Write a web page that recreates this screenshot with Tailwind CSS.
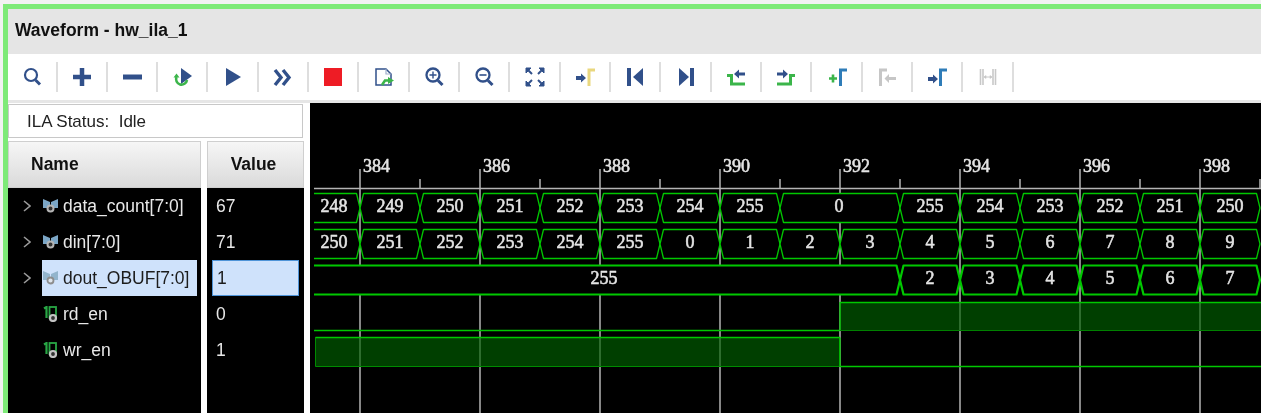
<!DOCTYPE html>
<html>
<head>
<meta charset="utf-8">
<script src="https://cdn.jsdelivr.net/npm/@tailwindcss/browser@4"></script>
</head>
<body class="m-0 bg-[#f2f2f2] font-['Liberation_Sans',Arial,sans-serif]">
<div class="w-[1261px] h-[413px] overflow-hidden pt-[4px] pl-[3px] blur-[0.4px]">
<div class="h-[409px] border-t-[5px] border-l-[5px] border-[#7eea78] flex flex-col bg-white">

  <div class="h-[45px] shrink-0 bg-[#e5e5e5] flex items-center pl-[7px] pb-[2px] text-[17.5px] font-bold text-[#111]">Waveform - hw_ila_1</div>

  <div class="h-[46px] shrink-0 bg-white flex items-center">
    <div class="w-[49.5px] h-[30px] shrink-0 flex items-center justify-center border-r-2 border-[#dedede]"><svg width="24" height="24" viewBox="0 0 24 24" fill="none" stroke="#31508a"><circle cx="11" cy="10" r="6" stroke-width="2.2"/><path d="M15.5 15L20 19.5" stroke-width="3"/></svg></div>
    <div class="w-[50.33px] h-[30px] shrink-0 flex items-center justify-center border-r-2 border-[#dedede]"><svg width="24" height="24" viewBox="0 0 24 24" fill="none" stroke="#31508a"><path d="M3 12H21M12 3V21" stroke-width="4.5"/></svg></div>
    <div class="w-[50.33px] h-[30px] shrink-0 flex items-center justify-center border-r-2 border-[#dedede]"><svg width="24" height="24" viewBox="0 0 24 24" fill="none" stroke="#31508a"><path d="M3 12H22" stroke-width="5"/></svg></div>
    <div class="w-[50.33px] h-[30px] shrink-0 flex items-center justify-center border-r-2 border-[#dedede]"><svg width="24" height="24" viewBox="0 0 24 24" fill="none"><path d="M11 3L22 11L11 19Z" fill="#31508a"/><path d="M6.5 12A5.5 5.5 0 1 0 17 15" stroke="#3bb54a" stroke-width="2.6"/><path d="M3.5 12.5L6.5 8.5L9.5 12.5Z" fill="#3bb54a"/></svg></div>
    <div class="w-[50.33px] h-[30px] shrink-0 flex items-center justify-center border-r-2 border-[#dedede]"><svg width="24" height="24" viewBox="0 0 24 24"><path d="M5 3L20 12L5 21Z" fill="#31508a"/></svg></div>
    <div class="w-[50.33px] h-[30px] shrink-0 flex items-center justify-center border-r-2 border-[#dedede]"><svg width="24" height="24" viewBox="0 0 24 24" fill="none" stroke="#31508a"><path d="M4 5L10 12.5L4 20M12 5L18 12.5L12 20" stroke-width="3.4"/></svg></div>
    <div class="w-[50.33px] h-[30px] shrink-0 flex items-center justify-center border-r-2 border-[#dedede]"><svg width="24" height="24" viewBox="0 0 24 24"><rect x="3" y="3" width="18" height="18" fill="#ee1c25"/></svg></div>
    <div class="w-[50.33px] h-[30px] shrink-0 flex items-center justify-center border-r-2 border-[#dedede]"><svg width="24" height="24" viewBox="0 0 24 24" fill="none"><path d="M4 4H14L19 9V20H4Z" stroke="#31508a" stroke-width="1.5"/><path d="M14 4V9H19" stroke="#9fb0cc" stroke-width="1.2"/><path d="M10 20L13 15.5H17" stroke="#3bb54a" stroke-width="2.6"/><path d="M16 12L22 15.5L16 19Z" fill="#3bb54a"/></svg></div>
    <div class="w-[50.33px] h-[30px] shrink-0 flex items-center justify-center border-r-2 border-[#dedede]"><svg width="24" height="24" viewBox="0 0 24 24" fill="none" stroke="#31508a"><circle cx="11" cy="10" r="6.5" stroke-width="2.3"/><path d="M16 15.5L20.5 20" stroke-width="3"/><path d="M7.5 10H14.5M11 6.5V13.5" stroke-width="1.4"/></svg></div>
    <div class="w-[50.33px] h-[30px] shrink-0 flex items-center justify-center border-r-2 border-[#dedede]"><svg width="24" height="24" viewBox="0 0 24 24" fill="none" stroke="#31508a"><circle cx="11" cy="10" r="6.5" stroke-width="2.3"/><path d="M16 15.5L20.5 20" stroke-width="3"/><path d="M7.5 10H14.5" stroke-width="1.6"/></svg></div>
    <div class="w-[50.33px] h-[30px] shrink-0 flex items-center justify-center border-r-2 border-[#dedede]"><svg width="24" height="24" viewBox="0 0 24 24" fill="#31508a" stroke="#31508a"><path d="M3 3H8L3 8ZM21 3H16L21 8ZM3 21H8L3 16ZM21 21H16L21 16Z" stroke-width="1"/><path d="M5 5L9 9M19 5L15 9M5 19L9 15M19 19L15 15" stroke-width="2"/></svg></div>
    <div class="w-[50.33px] h-[30px] shrink-0 flex items-center justify-center border-r-2 border-[#dedede]"><svg width="24" height="24" viewBox="0 0 24 24" fill="none"><path d="M3 11H8V8.5L13 13L8 17.5V15H3Z" fill="#31508a"/><path d="M16 21V5H22" stroke="#e9d77e" stroke-width="3"/></svg></div>
    <div class="w-[50.33px] h-[30px] shrink-0 flex items-center justify-center border-r-2 border-[#dedede]"><svg width="24" height="24" viewBox="0 0 24 24" fill="#31508a"><rect x="4" y="3" width="4" height="18"/><path d="M20 3V21L10 12Z"/></svg></div>
    <div class="w-[50.33px] h-[30px] shrink-0 flex items-center justify-center border-r-2 border-[#dedede]"><svg width="24" height="24" viewBox="0 0 24 24" fill="#31508a"><rect x="16" y="3" width="4" height="18"/><path d="M5 3V21L15 12Z"/></svg></div>
    <div class="w-[50.33px] h-[30px] shrink-0 flex items-center justify-center border-r-2 border-[#dedede]"><svg width="24" height="24" viewBox="0 0 24 24" fill="none"><path d="M3 10.5H7.5V19H21" stroke="#3bb54a" stroke-width="3"/><path d="M21 7.5H15V4.5L10 9L15 13.5V10.5H21Z" fill="#31508a"/></svg></div>
    <div class="w-[50.33px] h-[30px] shrink-0 flex items-center justify-center border-r-2 border-[#dedede]"><svg width="24" height="24" viewBox="0 0 24 24" fill="none"><path d="M3 19H16.5V10.5H21" stroke="#3bb54a" stroke-width="3"/><path d="M3 7.5H9V4.5L14 9L9 13.5V10.5H3Z" fill="#31508a"/></svg></div>
    <div class="w-[50.33px] h-[30px] shrink-0 flex items-center justify-center border-r-2 border-[#dedede]"><svg width="24" height="24" viewBox="0 0 24 24" fill="none"><path d="M4 13.5H12M8 9.5V17.5" stroke="#3bb54a" stroke-width="2.6"/><path d="M15.5 21V5H22" stroke="#2e7cb8" stroke-width="3"/></svg></div>
    <div class="w-[50.33px] h-[30px] shrink-0 flex items-center justify-center border-r-2 border-[#dedede]"><svg width="24" height="24" viewBox="0 0 24 24" fill="none"><path d="M5.5 21V5H12" stroke="#c6c6c6" stroke-width="3"/><path d="M21 12H14V9L9.5 13.5L14 18V15H21Z" fill="#c6c6c6"/></svg></div>
    <div class="w-[50.33px] h-[30px] shrink-0 flex items-center justify-center border-r-2 border-[#dedede]"><svg width="24" height="24" viewBox="0 0 24 24" fill="none"><path d="M3 12H8V9.5L13 14L8 18.5V16H3Z" fill="#31508a"/><path d="M15.5 21V5H22" stroke="#2e7cb8" stroke-width="3"/></svg></div>
    <div class="w-[50.33px] h-[30px] shrink-0 flex items-center justify-center border-r-2 border-[#dedede]"><svg width="24" height="24" viewBox="0 0 24 24" fill="none" stroke="#c8c8c8"><path d="M4.5 4V20M7 4V20M17 4V20M19.5 4V20" stroke-width="1.6"/><path d="M8 12H16" stroke-width="1"/><path d="M8 12L10 10.5V13.5ZM16 12L14 10.5V13.5Z" fill="#c8c8c8" stroke-width=".6"/></svg></div>
  </div>

  <div class="h-[3px] shrink-0 bg-[#e6e6e6]"></div>

  <div class="flex-1 min-h-0 flex bg-white">
    <div class="w-[296px] shrink-0 flex flex-col pt-px">
      <div class="h-[34px] w-[295px] shrink-0 border border-[#c8c8c8] bg-white flex items-center pl-[18px] pt-[2px] text-[17px] text-[#222]">ILA Status:&nbsp; Idle</div>
      <div class="flex-1 mt-[3px] flex gap-[6px]">
        <div class="w-[193px] bg-black flex flex-col text-[17.5px] text-[#e8e8e8]">
          <div class="h-[47px] shrink-0 bg-gradient-to-b from-[#f6f6f6] to-[#dadada] border border-[#cfcfcf] flex items-center pl-[22px] font-bold text-[#111]">Name</div>
          <div class="h-[36px] flex items-center">
            <svg class="ml-[15px] shrink-0" width="8" height="12" viewBox="0 0 8 12" fill="none" stroke="#9a9a9a" stroke-width="1.6"><path d="M1 1L7 6L1 11"/></svg>
            <svg class="ml-[12px] shrink-0" width="16" height="14" viewBox="0 0 16 14"><path d="M0 0L7 3V9H0ZM15 0L8 3V9H15Z" fill="#7ba6c6"/><circle cx="7.5" cy="9.5" r="3" fill="#333" stroke="#b4b4b4" stroke-width="2"/></svg>
            <span class="ml-[4px]">data_count[7:0]</span>
          </div>
          <div class="h-[36px] flex items-center">
            <svg class="ml-[15px] shrink-0" width="8" height="12" viewBox="0 0 8 12" fill="none" stroke="#9a9a9a" stroke-width="1.6"><path d="M1 1L7 6L1 11"/></svg>
            <svg class="ml-[12px] shrink-0" width="16" height="14" viewBox="0 0 16 14"><path d="M0 0L7 3V9H0ZM15 0L8 3V9H15Z" fill="#7ba6c6"/><circle cx="7.5" cy="9.5" r="3" fill="#333" stroke="#b4b4b4" stroke-width="2"/></svg>
            <span class="ml-[4px]">din[7:0]</span>
          </div>
          <div class="h-[36px] flex items-center">
            <svg class="ml-[15px] shrink-0" width="8" height="12" viewBox="0 0 8 12" fill="none" stroke="#9a9a9a" stroke-width="1.6"><path d="M1 1L7 6L1 11"/></svg>
            <div class="ml-[11px] mr-[4px] flex-1 h-[36px] bg-[#cfe2fb] flex items-center pl-px text-[#1c1c1c] min-w-0 whitespace-nowrap">
              <svg class="shrink-0" width="16" height="14" viewBox="0 0 16 14"><path d="M0 0L7 3V9H0ZM15 0L8 3V9H15Z" fill="#92b4cc"/><circle cx="7.5" cy="9.5" r="3" fill="#dfe6ee" stroke="#8d8d8d" stroke-width="1.8"/></svg>
              <span class="ml-[4px]">dout_OBUF[7:0]</span>
            </div>
          </div>
          <div class="h-[36px] flex items-center">
            <svg class="ml-[35px] shrink-0" width="16" height="16" viewBox="0 0 16 16" fill="none"><path d="M1 2.5L3.5 1V12" stroke="#28a745" stroke-width="2.2"/><rect x="6.5" y="1" width="6.5" height="11" stroke="#28a745" stroke-width="1.8"/><circle cx="10" cy="12" r="3" fill="#333" stroke="#c4c4c4" stroke-width="2.2"/></svg>
            <span class="ml-[4px]">rd_en</span>
          </div>
          <div class="h-[36px] flex items-center">
            <svg class="ml-[35px] shrink-0" width="16" height="16" viewBox="0 0 16 16" fill="none"><path d="M1 2.5L3.5 1V12" stroke="#28a745" stroke-width="2.2"/><rect x="6.5" y="1" width="6.5" height="11" stroke="#28a745" stroke-width="1.8"/><circle cx="10" cy="12" r="3" fill="#333" stroke="#c4c4c4" stroke-width="2.2"/></svg>
            <span class="ml-[4px]">wr_en</span>
          </div>
        </div>
        <div class="w-[97px] bg-black flex flex-col text-[17.5px] text-[#e8e8e8]">
          <div class="h-[47px] shrink-0 bg-gradient-to-b from-[#f6f6f6] to-[#dadada] border border-[#cfcfcf] flex items-center justify-center pr-[4px] font-bold text-[#111]">Value</div>
          <div class="h-[36px] flex items-center pl-[9px]">67</div>
          <div class="h-[36px] flex items-center pl-[9px]">71</div>
          <div class="h-[36px] ml-[5px] mr-[5px] flex items-center pl-[4px] bg-[#cfe2fb] border border-[#4f94d8] text-[#1c1c1c]">1</div>
          <div class="h-[36px] flex items-center pl-[9px]">0</div>
          <div class="h-[36px] flex items-center pl-[9px]">1</div>
        </div>
      </div>
    </div>

    <div class="w-[6px] shrink-0"></div>

    <svg class="flex-1 min-w-0 bg-black" width="951" height="310" viewBox="310 103 951 310" font-family="'Liberation Serif',serif" font-size="18" stroke-linejoin="round">
      <defs>
        <path id="h60" d="M0 14.5L3.5 0H56.5L60 14.5L56.5 29H3.5Z"/>
        <path id="h120" d="M0 14.5L3.5 0H116.5L120 14.5L116.5 29H3.5Z"/>
      </defs>
      <g stroke="#b4b4b4" stroke-width="1.5">
        <path d="M360 169V413M480 169V413M600 169V413M720 169V413M840 169V413M960 169V413M1080 169V413M1200 169V413"/>
        <path d="M314 188.5H1261M420 179V188M540 179V188M660 179V188M780 179V188M900 179V188M1020 179V188M1140 179V188M1260 179V188"/>
      </g>
      <g fill="#e4e4e4" stroke="#e4e4e4" stroke-width=".55">
        <text x="363" y="172">384</text><text x="483" y="172">386</text><text x="603" y="172">388</text><text x="723" y="172">390</text><text x="843" y="172">392</text><text x="963" y="172">394</text><text x="1083" y="172">396</text><text x="1203" y="172">398</text>
      </g>

      <g fill="#000" stroke="#00c800" stroke-width="1.3">
        <g transform="translate(0 193.5)">
          <path d="M314 0H356.5L360 14.5L356.5 29H314"/>
          <use href="#h60" x="360"/><use href="#h60" x="420"/><use href="#h60" x="480"/><use href="#h60" x="540"/><use href="#h60" x="600"/><use href="#h60" x="660"/><use href="#h60" x="720"/><use href="#h120" x="780"/><use href="#h60" x="900"/><use href="#h60" x="960"/><use href="#h60" x="1020"/><use href="#h60" x="1080"/><use href="#h60" x="1140"/><use href="#h60" x="1200"/>
        </g>
        <g transform="translate(0 229.5)">
          <path d="M314 0H356.5L360 14.5L356.5 29H314"/>
          <use href="#h60" x="360"/><use href="#h60" x="420"/><use href="#h60" x="480"/><use href="#h60" x="540"/><use href="#h60" x="600"/><use href="#h60" x="660"/><use href="#h60" x="720"/><use href="#h60" x="780"/><use href="#h60" x="840"/><use href="#h60" x="900"/><use href="#h60" x="960"/><use href="#h60" x="1020"/><use href="#h60" x="1080"/><use href="#h60" x="1140"/><use href="#h60" x="1200"/>
        </g>
        <g transform="translate(0 265.5)" stroke-width="2.2">
          <path d="M308 0H896.5L900 14.5L896.5 29H308Z"/>
          <use href="#h60" x="900"/><use href="#h60" x="960"/><use href="#h60" x="1020"/><use href="#h60" x="1080"/><use href="#h60" x="1140"/><use href="#h60" x="1200"/>
        </g>
      </g>
      <rect x="308" y="260" width="6" height="40" fill="#000"/>

      <g fill="#e4e4e4" stroke="#e4e4e4" stroke-width=".55" text-anchor="middle">
        <text x="334" y="212">248</text><text x="390" y="212">249</text><text x="450" y="212">250</text><text x="510" y="212">251</text><text x="570" y="212">252</text><text x="630" y="212">253</text><text x="690" y="212">254</text><text x="750" y="212">255</text><text x="839" y="212">0</text><text x="930" y="212">255</text><text x="990" y="212">254</text><text x="1050" y="212">253</text><text x="1110" y="212">252</text><text x="1170" y="212">251</text><text x="1230" y="212">250</text>
        <text x="334" y="248">250</text><text x="390" y="248">251</text><text x="450" y="248">252</text><text x="510" y="248">253</text><text x="570" y="248">254</text><text x="630" y="248">255</text><text x="690" y="248">0</text><text x="750" y="248">1</text><text x="810" y="248">2</text><text x="870" y="248">3</text><text x="930" y="248">4</text><text x="990" y="248">5</text><text x="1050" y="248">6</text><text x="1110" y="248">7</text><text x="1170" y="248">8</text><text x="1230" y="248">9</text>
        <text x="604" y="284">255</text><text x="930" y="284">2</text><text x="990" y="284">3</text><text x="1050" y="284">4</text><text x="1110" y="284">5</text><text x="1170" y="284">6</text><text x="1230" y="284">7</text>
      </g>

      <rect x="840" y="302.5" width="425" height="28" fill="#006000" fill-opacity=".66"/>
      <rect x="315.5" y="337.5" width="524" height="29" fill="#006000" fill-opacity=".66" stroke="#008a00"/>
      <g fill="none" stroke="#00c800" stroke-width="1.3">
        <path d="M314 330.5H840V302.5H1261"/>
        <path d="M840 337.5V366.5H1261"/>
        <path d="M315.5 337.5H840"/>
      </g>
      <path d="M840 330.5H1261" stroke="#008000" stroke-width="1.2"/>
    </svg>
  </div>
</div>
</div>
</body>
</html>
